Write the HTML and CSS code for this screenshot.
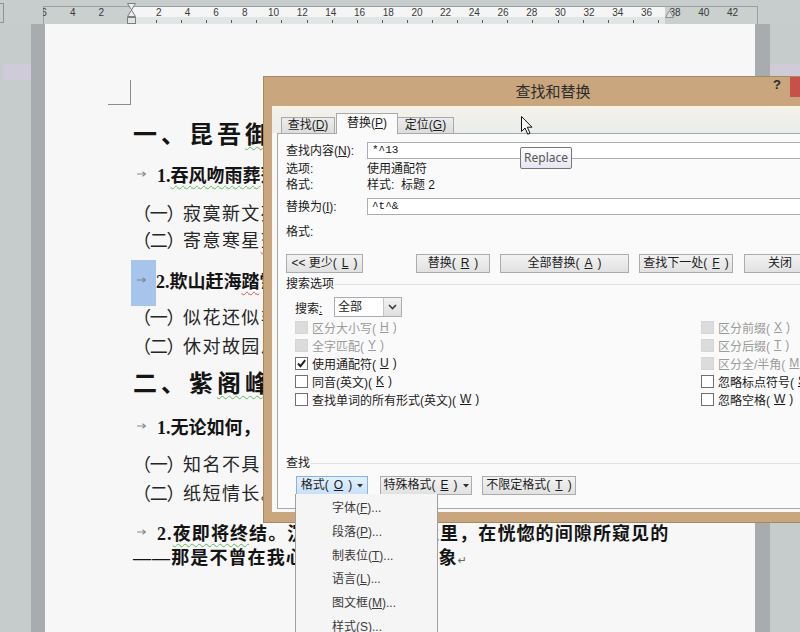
FILE: index.html
```html
<!DOCTYPE html>
<html lang="zh-CN">
<head>
<meta charset="utf-8">
<title>查找和替换</title>
<link rel="stylesheet" href="styles.css">
</head>
<body>
<div class="ruler-row">
  <div class="ruler-stub"></div>
  <div class="ruler">
    <div class="ruler-bg"><div class="rb-l"></div><div class="rb-w"></div><div class="rb-r"></div></div>
    <div class="ruler-nums"><div class="nums-inner">
      <span>6</span><span>4</span><span>2</span><span></span><span>2</span><span>4</span><span>6</span><span>8</span><span>10</span><span>12</span><span>14</span><span>16</span><span>18</span><span>20</span><span>22</span><span>24</span><span>26</span><span>28</span><span>30</span><span>32</span><span>34</span><span>36</span><span>38</span><span>40</span><span>42</span>
    </div></div>
    <div class="ruler-ticks"><i></i><i></i><i></i><i></i><i></i><i></i><i></i><i></i><i></i><i></i><i></i><i></i><i></i><i></i><i></i><i></i><i></i><i></i><i></i><i></i><i></i></div>
    <svg class="mk-indent" width="9" height="21" viewBox="0 0 9 21"><path d="M0.5 0.5 H8.5 L4.5 7 Z M4.5 7 L8.5 13.5 H0.5 Z" fill="#ececec" stroke="#7b7f80"/><rect x="0.5" y="14.5" width="8" height="6" fill="#e4e4e4" stroke="#7b7f80"/></svg>
    <svg class="mk-right" width="9" height="8" viewBox="0 0 9 8"><path d="M0.5 7.5 L4.5 0.5 L8.5 7.5 Z" fill="#dedede" stroke="#8a8e8f"/></svg>
  </div>
</div>

<div class="workspace">
  <div class="gutter"><div class="tint tint-l"></div></div>
  <div class="edge"></div>
  <div class="page">
    <div class="corner"></div>
    <div class="h1 h1a">一、昆吾<span class="gram">御</span>天</div>
    <div class="h2 h2a"><span class="tab"><svg width="10" height="6" viewBox="0 0 10 6"><path d="M0 3 H8 M5.5 0.8 L8.5 3 L5.5 5.2" fill="none" stroke="#8c8c8c" stroke-width="1.1"/></svg></span><span class="txt">1.<span class="gram">吞风吻雨葬</span>落日</span></div>
    <div class="p p1"><span class="num">（一）</span><span class="body">寂寞新文苑</span></div>
    <div class="p p2"><span class="num">（二）</span><span class="body">寄意寒星<span class="spell">荃</span></span></div>
    <div class="h2 selrow"><span class="tab sel"><svg width="10" height="6" viewBox="0 0 10 6"><path d="M0 3 H8 M5.5 0.8 L8.5 3 L5.5 5.2" fill="none" stroke="#7d8794" stroke-width="1.1"/></svg></span><span class="txt">2.欺山赶海<span class="spell">踏</span>雪</span></div>
    <div class="p p3"><span class="num">（一）</span><span class="body">似花还似非花</span></div>
    <div class="p p4"><span class="num">（二）</span><span class="body">休对故园思</span></div>
    <div class="h1 h1b">二、紫<span class="gram">阁峰</span>阴</div>
    <div class="h2 h2c"><span class="tab"><svg width="10" height="6" viewBox="0 0 10 6"><path d="M0 3 H8 M5.5 0.8 L8.5 3 L5.5 5.2" fill="none" stroke="#8c8c8c" stroke-width="1.1"/></svg></span><span class="txt">1.无论如何，</span></div>
    <div class="p p5"><span class="num">（一）</span><span class="body">知名不具；</span></div>
    <div class="p p6"><span class="num">（二）</span><span class="body">纸短情长。</span></div>
    <div class="h2 h2d"><span class="tab"><svg width="10" height="6" viewBox="0 0 10 6"><path d="M0 3 H8 M5.5 0.8 L8.5 3 L5.5 5.2" fill="none" stroke="#8c8c8c" stroke-width="1.1"/></svg></span><span class="txt">2.<span class="gram">夜即将终</span>结。沉睡于无尽的梦境里，在恍惚的间隙所窥见的</span></div>
    <div class="h2 h2e"><span class="txt">——那是不曾在我心头真正出现的景象<span class="pmark">↵</span></span></div>
  </div>
  <div class="edge edge-r"></div>
  <div class="gutter gutter-r"><div class="tint tint-r"></div></div>
</div>

<div class="dialog">
  <div class="dlg-title">
    <span></span>
    <span class="dlg-title-text">查找和替换</span>
    <div class="dlg-ctrls"><span class="dlg-help">?</span><span class="dlg-close"></span></div>
  </div>
  <div class="dlg-client">
    <div class="tabs">
      <div class="tab-btn t-find">查找(<u>D</u>)</div>
      <div class="tab-btn t-rep active">替换(<u>P</u>)</div>
      <div class="tab-btn t-goto">定位(<u>G</u>)</div>
    </div>
    <div class="panel">
      <div class="field f-find"><span>查找内容(<u>N</u>):</span><div class="box">*^13</div></div>
      <div class="field f-opt"><span>选项:</span><span>使用通配符</span></div>
      <div class="field f-fmt"><span>格式:</span><span class="wide">样式:  标题 2</span></div>
      <div class="field f-repl"><span>替换为(<u>I</u>):</span><div class="box">^t^&amp;</div></div>
      <div class="field f-fmt2"><span>格式:</span><span></span></div>
      <div class="btn-row">
        <div class="btn b-less">&lt;&lt; 更少(<u>L</u>)</div>
        <div class="btn b-rep">替换(<u>R</u>)</div>
        <div class="btn b-all">全部替换(<u>A</u>)</div>
        <div class="btn b-next">查找下一处(<u>F</u>)</div>
        <div class="btn b-close">关闭</div>
      </div>
      <div class="group-h g-search"><span>搜索选项</span><i></i></div>
      <div class="search-row">
        <span class="s-label">搜索<u>:</u></span>
        <div class="select"><span class="sel-val">全部</span><span class="sel-arrow"><svg width="9" height="6" viewBox="0 0 9 6"><path d="M1 1 L4.5 4.5 L8 1" fill="none" stroke="#3c3c3c" stroke-width="1.6"/></svg></span></div>
      </div>
      <div class="checks">
        <div class="chk dis"><span class="cb"></span>区分大小写(<u>H</u>)</div>
        <div class="chk dis"><span class="cb"></span>区分前缀(<u>X</u>)</div>
        <div class="chk dis"><span class="cb"></span>全字匹配(<u>Y</u>)</div>
        <div class="chk dis"><span class="cb"></span>区分后缀(<u>T</u>)</div>
        <div class="chk"><span class="cb"><svg width="11" height="11" viewBox="0 0 11 11"><path d="M2 5.5 L4.5 8.2 L9.2 2.2" fill="none" stroke="#1e1e1e" stroke-width="1.9"/></svg></span>使用通配符(<u>U</u>)</div>
        <div class="chk dis"><span class="cb"></span>区分全/半角(<u>M</u>)</div>
        <div class="chk"><span class="cb"></span>同音(英文)(<u>K</u>)</div>
        <div class="chk"><span class="cb"></span>忽略标点符号(<u>S</u>)</div>
        <div class="chk"><span class="cb"></span>查找单词的所有形式(英文)(<u>W</u>)</div>
        <div class="chk"><span class="cb"></span>忽略空格(<u>W</u>)</div>
      </div>
      <div class="group-h g-find"><span>查找</span><i></i></div>
      <div class="btn-row2">
        <div class="btn hot b-fmt">格式(<u>O</u>)<svg width="6" height="4" viewBox="0 0 6 4"><path d="M0 0 H6 L3 3.5 Z" fill="#333"/></svg></div>
        <div class="btn b-spec">特殊格式(<u>E</u>)<svg width="6" height="4" viewBox="0 0 6 4"><path d="M0 0 H6 L3 3.5 Z" fill="#333"/></svg></div>
        <div class="btn b-nofmt">不限定格式(<u>T</u>)</div>
      </div>
    </div>
  </div>
</div>

<div class="tooltip">Replace</div>
<svg class="cursor" width="13" height="20" viewBox="0 0 13 20"><path d="M0.5 0.5 V15.5 L4 12 L6.8 18.2 L9 17.2 L6.3 11.2 H11 Z" fill="#fff" stroke="#111" stroke-width="1" stroke-linejoin="round"/></svg>

<div class="menu">
  <div class="mi">字体(<u>F</u>)...</div>
  <div class="mi">段落(<u>P</u>)...</div>
  <div class="mi">制表位(<u>T</u>)...</div>
  <div class="mi">语言(<u>L</u>)...</div>
  <div class="mi">图文框(<u>M</u>)...</div>
  <div class="mi">样式(<u>S</u>)...</div>
</div>
</body>
</html>
```

FILE: styles.css
```css
* { box-sizing: border-box; }
html, body { margin: 0; padding: 0; width: 800px; height: 632px; overflow: hidden; }
body {
  position: relative;
  background: #c7cdcd;
  font-family: "Noto Sans CJK SC", "Noto Sans", sans-serif;
  color: #1b1b1b;
  text-autospace: no-autospace;
}
u { text-decoration: underline; text-underline-offset: 1px; text-decoration-thickness: 1px; }

/* ---------- ruler ---------- */
.ruler-row { display: flex; align-items: flex-start; height: 24px; }
.ruler-stub { width: 4px; height: 20px; margin-top: 3px; border: 1px solid #8e9494; border-left: 0; }
.ruler { display: grid; margin-left: 39px; margin-top: 6px; width: 715px; height: 17px; }
.ruler > * { grid-area: 1 / 1; }
.ruler-bg { display: flex; border: 1px solid #9ba1a1; border-bottom: 0; }
.rb-l { width: 86px; background: #c9d0ce; }
.rb-w { width: 535px; background: linear-gradient(#f5f5f5 0, #f5f5f5 10px, #e2e5e5 10px); }
.rb-r { flex: 1; background: #c9d0ce; }
.ruler-nums { overflow: hidden; height: 11px; margin-top: 1px; align-self: start; }
.nums-inner { display: flex; margin-left: -13.35px; }
.nums-inner span {
  flex: none; width: 28.7px; text-align: center;
  font: 10px/11px "Liberation Sans", sans-serif; color: #3a3a3a;
}
.ruler-ticks { align-self: end; display: flex; height: 6px; margin-left: 113px; }
.ruler-ticks i { flex: none; width: 25.1px; height: 3px; margin-top: 2px; border-left: 1px solid #5a5a5a; }
.mk-indent { align-self: start; margin-left: 84px; margin-top: -3px; }
.mk-right { align-self: start; margin-left: 622px; margin-top: 4px; }

/* ---------- workspace ---------- */
.workspace { display: flex; height: 608px; }
.gutter { width: 31px; flex: none; background: #c6cccc; padding-left: 3px; }
.gutter-r { flex: 1; padding-left: 0; }
.tint { background: #cfcbd8; }
.tint-l { margin-top: 40px; height: 16px; }
.tint-r { margin-top: 40px; height: 12px; }
.edge { width: 14px; flex: none; background: #a9acaf; }
.edge-r { width: 15px; }

.page {
  width: 710px; flex: none; background: #f7f7f7;
  padding-left: 88px; color: #141414; white-space: nowrap;
}
.corner {
  width: 23px; height: 25px; margin-left: -25px; margin-top: 56px;
  border-right: 1px solid #8d8d8d; border-bottom: 1px solid #8d8d8d;
}
.h1 { font-size: 24px; line-height: 34px; height: 34px; font-weight: 700; letter-spacing: 4px; }
.h1a { margin-top: 11px; }
.h1b { margin-top: 9px; }
.h2 {
  display: flex; align-items: center; height: 26px;
  font-family: "Liberation Serif", "Noto Sans CJK SC", serif;
  font-size: 18px; font-weight: 700;
}
.tab { width: 24px; flex: none; display: flex; align-items: center; padding-left: 4px; }
.h2a { margin-top: 11px; }
.p { font-size: 18px; line-height: 22px; height: 22px; color: #262626; }
.p .num { letter-spacing: -1.3px; }
.p .body { letter-spacing: 1.4px; }
.p1 { margin-top: 14px; }
.p2 { margin-top: 5px; }
.selrow { height: 46px; margin-top: 10px; align-items: stretch; }
.selrow .tab.sel { width: 25px; margin-left: -2px; padding-left: 6px; padding-bottom: 6px; background: #a7c5ec; }
.selrow .txt { align-self: center; margin-bottom: 6px; }
.p3 { margin-top: -1px; }
.p4 { margin-top: 7px; }
.h2c { margin-top: 14px; }
.p5 { margin-top: 13px; }
.p6 { margin-top: 7px; }
.h2d { margin-top: 17px; height: 24px; letter-spacing: 1.1px; }
.h2e { height: 24px; letter-spacing: 1.1px; }
.pmark { font-size: 11px; font-weight: 400; color: #666; font-family: "DejaVu Sans", sans-serif; }
.gram { text-decoration: underline wavy #62b862; text-decoration-thickness: 1px; text-underline-offset: 3px; }
.spell { text-decoration: underline wavy #e05050; text-decoration-thickness: 1px; text-underline-offset: 3px; }

/* ---------- dialog ---------- */
.dialog {
  position: absolute; left: 263px; top: 76px; width: 580px; height: 447px;
  background: #c9a67e; border: 1px solid #a98960;
  display: flex; flex-direction: column;
  font-family: "Liberation Sans", "Noto Sans CJK SC", sans-serif;
  font-size: 12px;
}
.dlg-title { height: 29px; flex: none; display: grid; grid-template-columns: 1fr auto 1fr; align-items: center; }
.dlg-title-text { font-size: 15px; color: #2c2c2c; line-height: 28px; }
.dlg-ctrls { display: flex; justify-content: flex-end; align-self: start; height: 20px; }
.dlg-help { font: bold 13px/20px "Liberation Sans", sans-serif; color: #2a2a2a; margin-right: 9px; margin-top: -2px; }
.dlg-close { width: 45px; height: 20px; margin-right: 7px; background: #c8504b; }
.dlg-client {
  flex: 1; margin-left: 8px; margin-right: 8px; margin-bottom: 10px;
  background: #f7f7f7; display: flex; flex-direction: column; padding-left: 5px;
}
.tabs {
  height: 27px; flex: none; display: flex; align-items: flex-end;
  margin-left: -5px; padding-left: 9px;
  background: linear-gradient(#f6f2e7, #e8eded);
}
.tab-btn {
  height: 16px; border: 1px solid #a9a9a9; border-bottom: 0;
  background: linear-gradient(#ececec, #dcdcdc);
  font-size: 12px; line-height: 15px; text-align: center; color: #1c1c1c;
}
.t-find { width: 54px; }
.t-rep { width: 62px; height: 21px; margin-left: 1px; margin-bottom: -1px; background: #fafafa; line-height: 19px; position: relative; z-index: 1; }
.t-goto { width: 56px; border-left: 0; }
.panel {
  flex: 1; margin-bottom: 3px; border: 1px solid #a9a9a9; border-right: 0;
  background: #fafafa; padding-left: 8px; color: #1b1b1b;
}
.field { display: grid; grid-template-columns: 81px 1fr; align-items: center; line-height: 14px; }
.wide { white-space: pre; }
.box {
  height: 17px; border: 1px solid #abadb3; border-right: 0; background: #fff;
  font: 11px/15px "Liberation Mono", monospace; color: #111; padding-left: 4px;
}
.f-find { margin-top: 8px; }
.f-opt { margin-top: 3px; }
.f-fmt { margin-top: 2px; }
.f-repl { margin-top: 6px; }
.f-fmt2 { margin-top: 10px; height: 14px; }
.btn {
  height: 19px; border: 1px solid #acacac;
  background: linear-gradient(#f3f3f3, #e1e1e1);
  line-height: 17px; text-align: center; color: #1b1b1b; flex: none;
  display: flex; align-items: center; justify-content: center; gap: 5px;
}
.btn-row { display: flex; margin-top: 15px; }
.b-less { width: 77px; }
.b-rep { width: 74px; margin-left: 53px; }
.b-all { width: 129px; margin-left: 10px; }
.b-next { width: 94px; margin-left: 10px; }
.b-close { width: 72px; margin-left: 11px; }
.group-h { display: flex; align-items: center; line-height: 14px; height: 14px; }
.group-h i { flex: 1; height: 1px; background: #dbe2e6; margin-left: 1px; }
.g-search { margin-top: 4px; }
.g-find { margin-top: 48px; }
.search-row { display: flex; align-items: center; margin-top: 6px; margin-left: 9px; height: 20px; }
.s-label { width: 39px; }
.select { width: 68px; height: 20px; border: 1px solid #abadb3; background: #fff; display: flex; }
.sel-val { flex: 1; padding-left: 3px; line-height: 18px; }
.sel-arrow { width: 18px; background: linear-gradient(#f1f1f1, #e0e0e0); border-left: 1px solid #c5c5c5; display: flex; align-items: center; justify-content: center; }
.checks { display: grid; grid-template-columns: 406px 1fr; grid-auto-rows: 18px; margin-top: 1px; margin-left: 9px; }
.chk { display: flex; align-items: center; gap: 4px; white-space: nowrap; }
.cb { width: 13px; height: 13px; flex: none; border: 1px solid #707070; background: #fff; display: flex; align-items: center; justify-content: center; }
.chk.dis { color: #9a9a9a; }
.chk.dis .cb { border-color: #d6d6d6; background: #dcdcdc; }
.btn-row2 { display: flex; margin-top: 6px; margin-left: 10px; }
.b-fmt { width: 72px; }
.b-spec { width: 92px; margin-left: 12px; }
.b-nofmt { width: 94px; margin-left: 10px; }
.btn.hot { background: linear-gradient(#e3f0fd, #c9e1fa); border-color: #7eb4ea; }

/* ---------- overlays ---------- */
.tooltip {
  position: absolute; left: 520px; top: 147px; width: 52px; height: 22px;
  border: 1px solid #767676; border-radius: 2px;
  background: linear-gradient(#ffffff, #e4e5f0);
  font: 12px/20px "Noto Sans", sans-serif; color: #575757; text-align: center;
}
.cursor { position: absolute; left: 521px; top: 116px; }
.menu {
  position: absolute; left: 295px; top: 494px; width: 143px; height: 140px;
  background: #f5f5f5; border: 1px solid #a0a0a0; border-top: 0;
  padding-top: 3px; padding-left: 36px;
  font-family: "Liberation Sans", "Noto Sans CJK SC", sans-serif;
  font-size: 12px; color: #3a3a3a;
}
.mi { height: 23.8px; line-height: 23.8px; }
```
